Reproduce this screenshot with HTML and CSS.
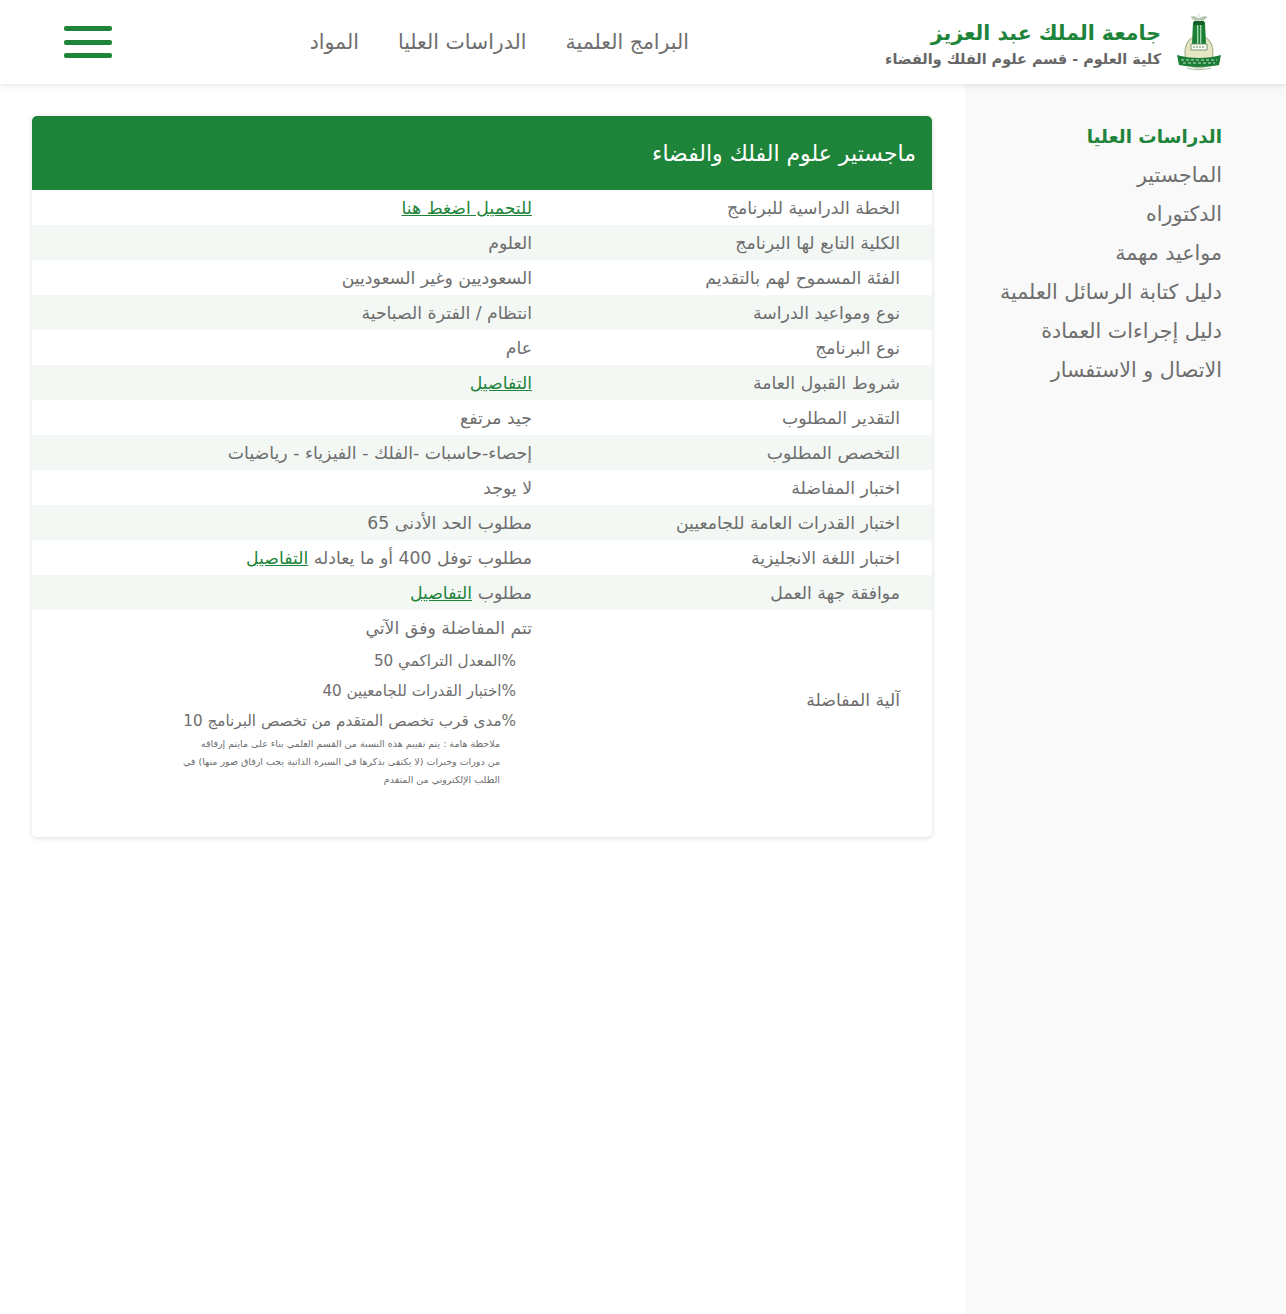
FILE: index.html
```html
<!DOCTYPE html>
<html lang="ar" dir="rtl">
<head>
<meta charset="utf-8">
<title>ماجستير علوم الفلك والفضاء</title>
<link rel="stylesheet" href="styles.css">
</head>
<body>
<header class="topbar">
  <a class="brand" href="#">
    <svg class="emblem" viewBox="0 0 46 58" aria-hidden="true">
      <path d="M23 0v8M15 4c3-1 6 0 8 2 2-2 5-3 8-2-2 3-5 4-8 3-3 1-6 0-8-3z" fill="#b5c4ac" stroke="#b5c4ac" stroke-width=".6"/>
      <path d="M9 40c0-11 6-17 14-17s14 6 14 17c0 9-6 15-14 15S9 49 9 40z" fill="#e6e6c4" stroke="#a8b58f" stroke-width="1.2"/>
      <path d="M17 9h12l1 22H16z" fill="#1c7f37"/>
      <path d="M18 8h10v4H18z" fill="#14602a"/>
      <path d="M21 12h1.4v19H21zM24 12h1.4v19H24z" fill="#a6d6b0"/>
      <path d="M15 31h16v6H15z" fill="#fbfbf4" stroke="#5d8a62" stroke-width=".8"/>
      <path d="M17 34h12" stroke="#5d8a62" stroke-width="1" stroke-dasharray="2 1"/>
      <path d="M1 42c7 2 14 3 22 3s15-1 22-3l-2 10c-6 1-13 2-20 2s-14-1-20-2z" fill="#1c7d37"/>
      <path d="M5 47h36M7 50h32" stroke="#c5e2c8" stroke-width="1" stroke-dasharray="3 2"/>
      <path d="M11 55c7 2 17 2 24 0" fill="none" stroke="#a9c6a6" stroke-width="1.2"/>
    </svg>
    <span class="brand-text">
      <strong class="brand-title">جامعة الملك عبد العزيز</strong>
      <span class="brand-sub">كلية العلوم - قسم علوم الفلك والفضاء</span>
    </span>
  </a>
  <nav class="topnav">
    <a href="#">البرامج العلمية</a>
    <a href="#">الدراسات العليا</a>
    <a href="#">المواد</a>
  </nav>
  <button class="burger" type="button" aria-label="القائمة"><span></span><span></span><span></span></button>
</header>
<div class="layout">
  <aside class="sidebar">
    <a class="side-head" href="#">الدراسات العليا</a>
    <a href="#">الماجستير</a>
    <a href="#">الدكتوراه</a>
    <a href="#">مواعيد مهمة</a>
    <a href="#">دليل كتابة الرسائل العلمية</a>
    <a href="#">دليل إجراءات العمادة</a>
    <a href="#">الاتصال و الاستفسار</a>
  </aside>
  <main class="content">
    <section class="card">
      <h1 class="card-title">ماجستير علوم الفلك والفضاء</h1>
      <table class="info">
        <tbody>
          <tr><th>الخطة الدراسية للبرنامج</th><td><a href="#">للتحميل اضغط هنا</a></td></tr>
          <tr><th>الكلية التابع لها البرنامج</th><td>العلوم</td></tr>
          <tr><th>الفئة المسموح لهم بالتقديم</th><td>السعوديين وغير السعوديين</td></tr>
          <tr><th>نوع ومواعيد الدراسة</th><td>انتظام / الفترة الصباحية</td></tr>
          <tr><th>نوع البرنامج</th><td>عام</td></tr>
          <tr><th>شروط القبول العامة</th><td><a href="#">التفاصيل</a></td></tr>
          <tr><th>التقدير المطلوب</th><td>جيد مرتفع</td></tr>
          <tr><th>التخصص المطلوب</th><td>إحصاء-حاسبات -الفلك - الفيزياء - رياضيات</td></tr>
          <tr><th>اختبار المفاضلة</th><td>لا يوجد</td></tr>
          <tr><th>اختبار القدرات العامة للجامعيين</th><td>مطلوب الحد الأدنى 65</td></tr>
          <tr><th>اختبار اللغة الانجليزية</th><td>مطلوب توفل 400 أو ما يعادله <a href="#">التفاصيل</a></td></tr>
          <tr><th>موافقة جهة العمل</th><td>مطلوب <a href="#">التفاصيل</a></td></tr>
          <tr class="last">
            <th>آلية المفاضلة</th>
            <td>
              <div class="rule-intro">تتم المفاضلة وفق الآتي</div>
              <ul class="rules">
                <li>%المعدل التراكمي 50</li>
                <li>%اختبار القدرات للجامعيين 40</li>
                <li>%مدى قرب تخصص المتقدم من تخصص البرنامج 10</li>
              </ul>
              <p class="note">ملاحظة هامة : يتم تقييم هذه النسبة من القسم العلمي بناء على مايتم إرفاقه<br>من دورات وخبرات (لا يكتفى بذكرها في السيرة الذاتية يجب ارفاق صور منها) في<br>الطلب الإلكتروني من المتقدم</p>
            </td>
          </tr>
        </tbody>
      </table>
    </section>
  </main>
</div>
</body>
</html>
```
FILE: styles.css
```css
* { box-sizing: border-box; }
html, body { margin: 0; padding: 0; }
body {
  font-family: "DejaVu Sans", "Noto Sans", sans-serif;
  color: #6e6e6e;
  background: #fff;
  min-height: 1314px;
  display: flex;
  flex-direction: column;
}
a { color: inherit; text-decoration: none; }

.topbar {
  height: 84px;
  display: flex;
  align-items: center;
  padding: 0 64px;
  background: #fff;
  box-shadow: 0 1px 6px rgba(0, 0, 0, .12);
  position: relative;
  z-index: 2;
}
.brand { display: flex; align-items: center; gap: 15px; width: 337px; flex: none; }
.emblem { width: 46px; height: 58px; flex: none; filter: blur(.35px); }
.brand-text { display: flex; flex-direction: column; white-space: nowrap; padding-top: 4px; }
.brand-title { color: #1e843a; font-size: 20.5px; line-height: 30px; font-weight: 700; }
.brand-sub { font-size: 14.4px; line-height: 22px; font-weight: 700; color: #666; }
.topnav { display: flex; gap: 39px; margin-right: 196px; font-size: 20.5px; line-height: 30px; white-space: nowrap; }
.burger {
  margin-right: auto;
  width: 48px;
  height: 32px;
  padding: 0;
  border: 0;
  background: none;
  display: flex;
  flex-direction: column;
  justify-content: space-between;
}
.burger span { display: block; height: 5px; border-radius: 2px; background: #1e843a; }

.layout { flex: 1; display: flex; }
.sidebar {
  width: 321px;
  flex: none;
  background: #f9f9f9;
  padding: 33px 64px 0 0;
  display: flex;
  flex-direction: column;
  font-size: 20.6px;
  line-height: 39px;
  white-space: nowrap;
}
.side-head { color: #1e843a; font-weight: 700; font-size: 18.3px; }

.content { flex: 1; padding: 32px 33px 0 32px; }
.card {
  border-radius: 5px;
  box-shadow: 0 1px 5px rgba(0, 0, 0, .14);
  background: #fff;
  padding-bottom: 48px;
  overflow: hidden;
}
.card-title {
  margin: 0;
  height: 74px;
  padding: 0 16px;
  display: flex;
  align-items: center;
  background: #1e843a;
  color: #fff;
  font-size: 22px;
  font-weight: 400;
}
.info { width: 100%; border-collapse: collapse; font-size: 17.3px; }
.info tr:nth-child(even) { background: #f4f8f5; }
.info th, .info td { height: 35px; padding: 2px 0 0; text-align: right; font-weight: 400; line-height: 33px; }
.info th { width: 384px; padding-left: 16px; padding-right: 32px; }
.info td { padding-right: 16px; }
.info td a { color: #1e843a; text-decoration: underline; }
.rule-intro { line-height: 34px; margin: -1px 0 1px; }
.last td { vertical-align: top; }
.rules { list-style: none; margin: 0; padding: 0 16px 0 0; font-size: 15.2px; line-height: 30px; }
.note { margin: -1px 0 0; padding-right: 32px; font-size: 9.5px; line-height: 18px; white-space: nowrap; }
```
